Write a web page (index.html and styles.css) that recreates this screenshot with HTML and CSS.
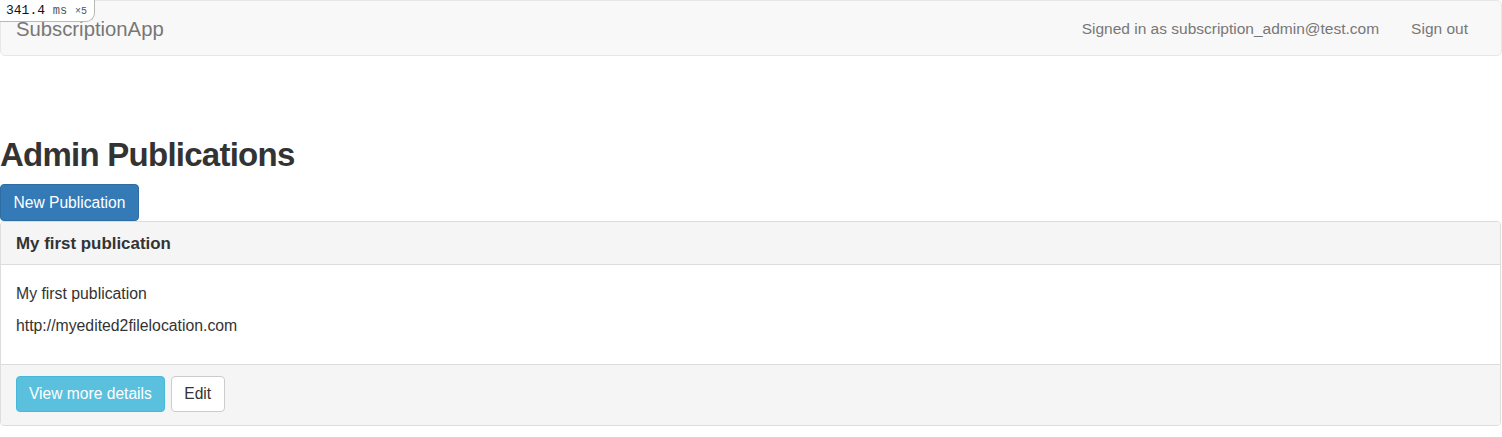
FILE: index.html
```html
<!DOCTYPE html>
<html lang="en">
<head>
<meta charset="utf-8">
<title>SubscriptionApp</title>
<link rel="stylesheet" href="styles.css">
</head>
<body>
<div class="profiler"><span class="prof-num">341.4</span> <span class="prof-unit">ms</span> <span class="prof-count">×5</span></div>
<nav class="navbar">
  <a class="brand" href="#">SubscriptionApp</a>
  <div class="nav-right">
    <span class="nav-text">Signed in as subscription_admin@test.com</span>
    <a class="nav-link" href="#">Sign out</a>
  </div>
</nav>
<main class="content">
  <h1 class="page-title">Admin Publications</h1>
  <a class="btn btn-primary" href="#">New Publication</a>
  <section class="panel">
    <div class="panel-heading"><h3 class="panel-title">My first publication</h3></div>
    <div class="panel-body">
      <p>My first publication</p>
      <p>http://myedited2filelocation.com</p>
    </div>
    <div class="panel-footer">
      <a class="btn btn-info" href="#">View more details</a>
      <a class="btn btn-default" href="#">Edit</a>
    </div>
  </section>
</main>
</body>
</html>
```
FILE: styles.css
```css
* { box-sizing: border-box; }
html, body { margin: 0; padding: 0; }
body {
  font-family: "Liberation Sans", Arial, sans-serif;
  font-size: 15.8px;
  color: #333;
  background: #fff;
}
a { text-decoration: none; }

.profiler {
  position: absolute;
  top: 0;
  left: 0;
  height: 22px;
  width: 95px;
  background: #fff;
  border: 1px solid #b8b8b8;
  border-top: none;
  border-left: none;
  border-bottom-right-radius: 9px;
  font-family: "Liberation Mono", "DejaVu Sans Mono", monospace;
  font-size: 13px;
  line-height: 21px;
  padding-left: 6px;
  color: #111;
  white-space: nowrap;
  z-index: 10;
}
.prof-unit { color: #555; font-size: 12px; }
.prof-count { color: #555; font-size: 10px; }

.navbar {
  display: flex;
  align-items: center;
  justify-content: space-between;
  height: 56px;
  background: #f8f8f8;
  border: 1px solid #e7e7e7;
  border-radius: 5px;
  padding: 0 18px 0 15px;
}
.brand {
  font-size: 20.3px;
  color: #777;
  padding-top: 2px;
}
.nav-right {
  display: flex;
  align-items: center;
  gap: 32px;
  padding-top: 2px;
}
.nav-text, .nav-link {
  font-size: 15.5px;
  color: #777;
}
.nav-link { margin-right: 15px; }

.content { padding-top: 79px; }

.page-title {
  margin: 0 0 9px 0;
  font-size: 33px;
  line-height: 40px;
  font-weight: bold;
  color: #333;
  letter-spacing: -0.75px;
}

.btn {
  display: inline-block;
  font-size: 15.6px;
  line-height: 22px;
  padding: 6px 12px;
  border: 1px solid transparent;
  border-radius: 4px;
  white-space: nowrap;
}
.btn-primary {
  background: #337ab7;
  border-color: #2e6da4;
  color: #fff;
  height: 37px;
  padding: 6.5px 12.5px;
  vertical-align: top;
}
.btn-info {
  background: #5bc0de;
  border-color: #46b8da;
  color: #fff;
  height: 36px;
  padding: 6px 12px;
}
.btn-default {
  background: #fff;
  border-color: #ccc;
  color: #333;
  height: 36px;
  padding: 6px 12.5px;
}

.panel {
  border: 1px solid #ddd;
  border-radius: 4px;
  background: #fff;
  margin-right: 1px;
}
.panel-heading {
  height: 43px;
  background: #f5f5f5;
  border-bottom: 1px solid #ddd;
  border-radius: 3px 3px 0 0;
  padding: 0 15px;
  display: flex;
  align-items: center;
}
.panel-title {
  margin: 0;
  font-size: 16.9px;
  font-weight: bold;
  color: #333;
  padding-top: 1px;
}
.panel-body {
  height: 99px;
  padding: 18px 15px 0 15px;
}
.panel-body p {
  margin: 0 0 10px 0;
  line-height: 22px;
}
.panel-footer {
  height: 61px;
  background: #f5f5f5;
  border-top: 1px solid #ddd;
  border-radius: 0 0 3px 3px;
  padding: 11px 15px 0 15px;
  display: flex;
  gap: 6px;
  align-items: flex-start;
}
```
